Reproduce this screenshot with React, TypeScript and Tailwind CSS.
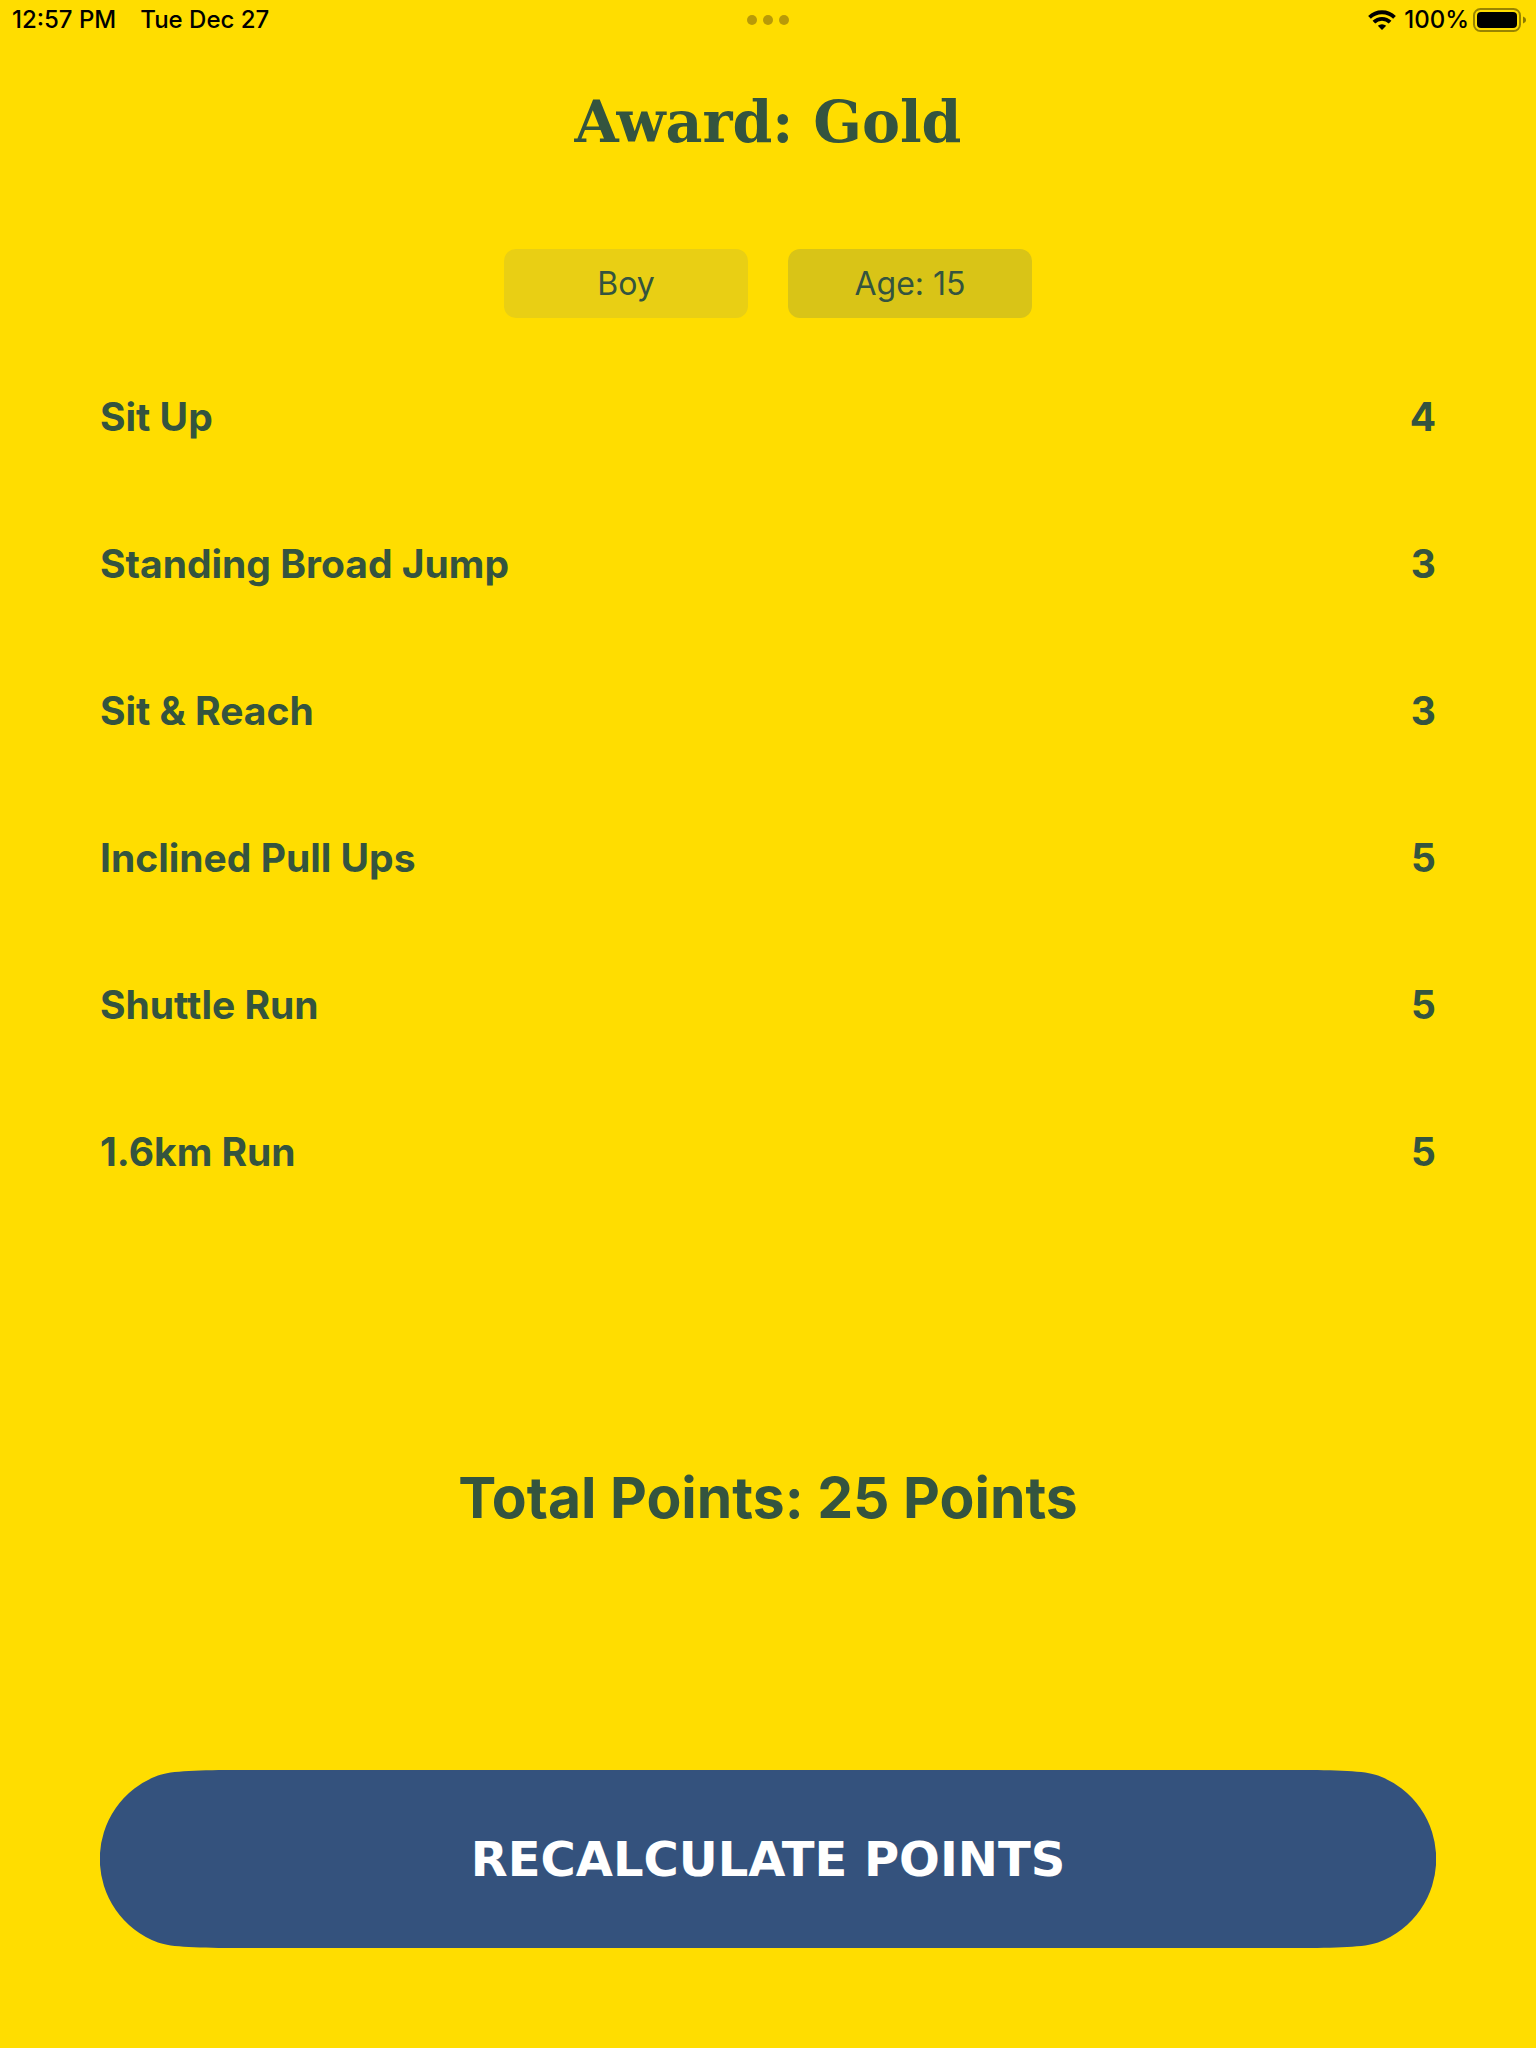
const SCORES = [
  { station: 'Sit Up', points: 4 },
  { station: 'Standing Broad Jump', points: 3 },
  { station: 'Sit & Reach', points: 3 },
  { station: 'Inclined Pull Ups', points: 5 },
  { station: 'Shuttle Run', points: 5 },
  { station: '1.6km Run', points: 5 },
]

const TOTAL = SCORES.reduce((sum, s) => sum + s.points, 0)

function WifiIcon() {
  return (
    <svg viewBox="0 0 28 20" className="h-5 w-7" aria-hidden="true">
      <g fill="none" stroke="#000" strokeWidth="3.8">
        <path d="M1.5 7.4A17.7 17.7 0 0 1 26.5 7.4" />
        <path d="M5.9 12.2A11.5 11.5 0 0 1 22.1 12.2" />
      </g>
      <path d="M14 20L9.8 15.8A6.2 6.2 0 0 1 18.2 15.8Z" />
    </svg>
  )
}

function BatteryIcon() {
  return (
    <svg viewBox="0 0 53 24" className="h-6 w-[53px]" aria-hidden="true">
      <rect x="1" y="1" width="46" height="22" rx="6.5" fill="none" stroke="#000" strokeOpacity="0.4" strokeWidth="2" />
      <rect x="4" y="4" width="40" height="16" rx="4" />
      <path d="M50 8.5C52 9.2 53 10.5 53 12S52 14.8 50 15.5Z" fillOpacity="0.45" />
    </svg>
  )
}

function StatusBar() {
  return (
    <header className="grid h-10 grid-cols-3 items-center px-2.5 text-2xl font-medium text-black">
      <div className="flex gap-6 pl-0.5">
        <span>12:57 PM</span>
        <span>Tue Dec 27</span>
      </div>
      <div className="flex justify-center gap-1.5">
        <span className="size-2.5 rounded-full bg-[#b89a08]" />
        <span className="size-2.5 rounded-full bg-[#b89a08]" />
        <span className="size-2.5 rounded-full bg-[#b89a08]" />
      </div>
      <div className="flex items-center justify-end">
        <WifiIcon />
        <span className="mr-1 ml-2">100%</span>
        <BatteryIcon />
      </div>
    </header>
  )
}

// Smooth "squircle" end of the big button
const CAP_PATH =
  'M150 0H140C100 0 71 0.7 58 5.5A89 89 0 0 0 58 172.5C71 177.3 100 178 140 178H150Z'

function RecalculateButton() {
  return (
    <button
      type="button"
      className="relative h-[178px] w-full font-['DejaVu_Sans',sans-serif] text-[48px] font-bold text-white"
    >
      <svg viewBox="0 0 150 178" className="absolute top-0 left-0 h-full w-[150px]" aria-hidden="true">
        <path d={CAP_PATH} fill="#34527d" />
      </svg>
      <svg viewBox="0 0 150 178" className="absolute top-0 right-0 h-full w-[150px] -scale-x-100" aria-hidden="true">
        <path d={CAP_PATH} fill="#34527d" />
      </svg>
      <span className="mx-[149px] flex h-full items-center justify-center bg-[#34527d]">RECALCULATE POINTS</span>
    </button>
  )
}

export default function App() {
  return (
    <div className="flex min-h-screen flex-col bg-[#ffdd00] font-['Inter',sans-serif] text-[#34543f]">
      <StatusBar />

      <main className="flex grow flex-col px-[100px] pb-[100px]">
        <h1 className="mt-11 text-center font-['Rockwell','DejaVu_Serif',serif] text-[57px] leading-[76px] font-bold">
          Award: Gold
        </h1>

        <div className="mt-[89px] flex justify-center gap-10">
          <button type="button" className="h-[69px] w-[244px] rounded-xl bg-[#e9cf14] text-[32px]">
            Boy
          </button>
          <button type="button" className="h-[69px] w-[244px] rounded-xl bg-[#d9c417] text-[32px]">
            Age: 15
          </button>
        </div>

        <table className="mt-[26px] w-full text-[39px] font-bold">
          <tbody>
            {SCORES.map(({ station, points }) => (
              <tr key={station} className="h-[147px]">
                <th scope="row" className="text-left font-bold">
                  {station}
                </th>
                <td className="text-right">{points}</td>
              </tr>
            ))}
          </tbody>
        </table>

        {/* Total sits midway between the list and the button */}
        <p className="my-auto text-center text-[57px] leading-[72px] font-bold">
          Total Points: {TOTAL} Points
        </p>

        <RecalculateButton />
      </main>
    </div>
  )
}
